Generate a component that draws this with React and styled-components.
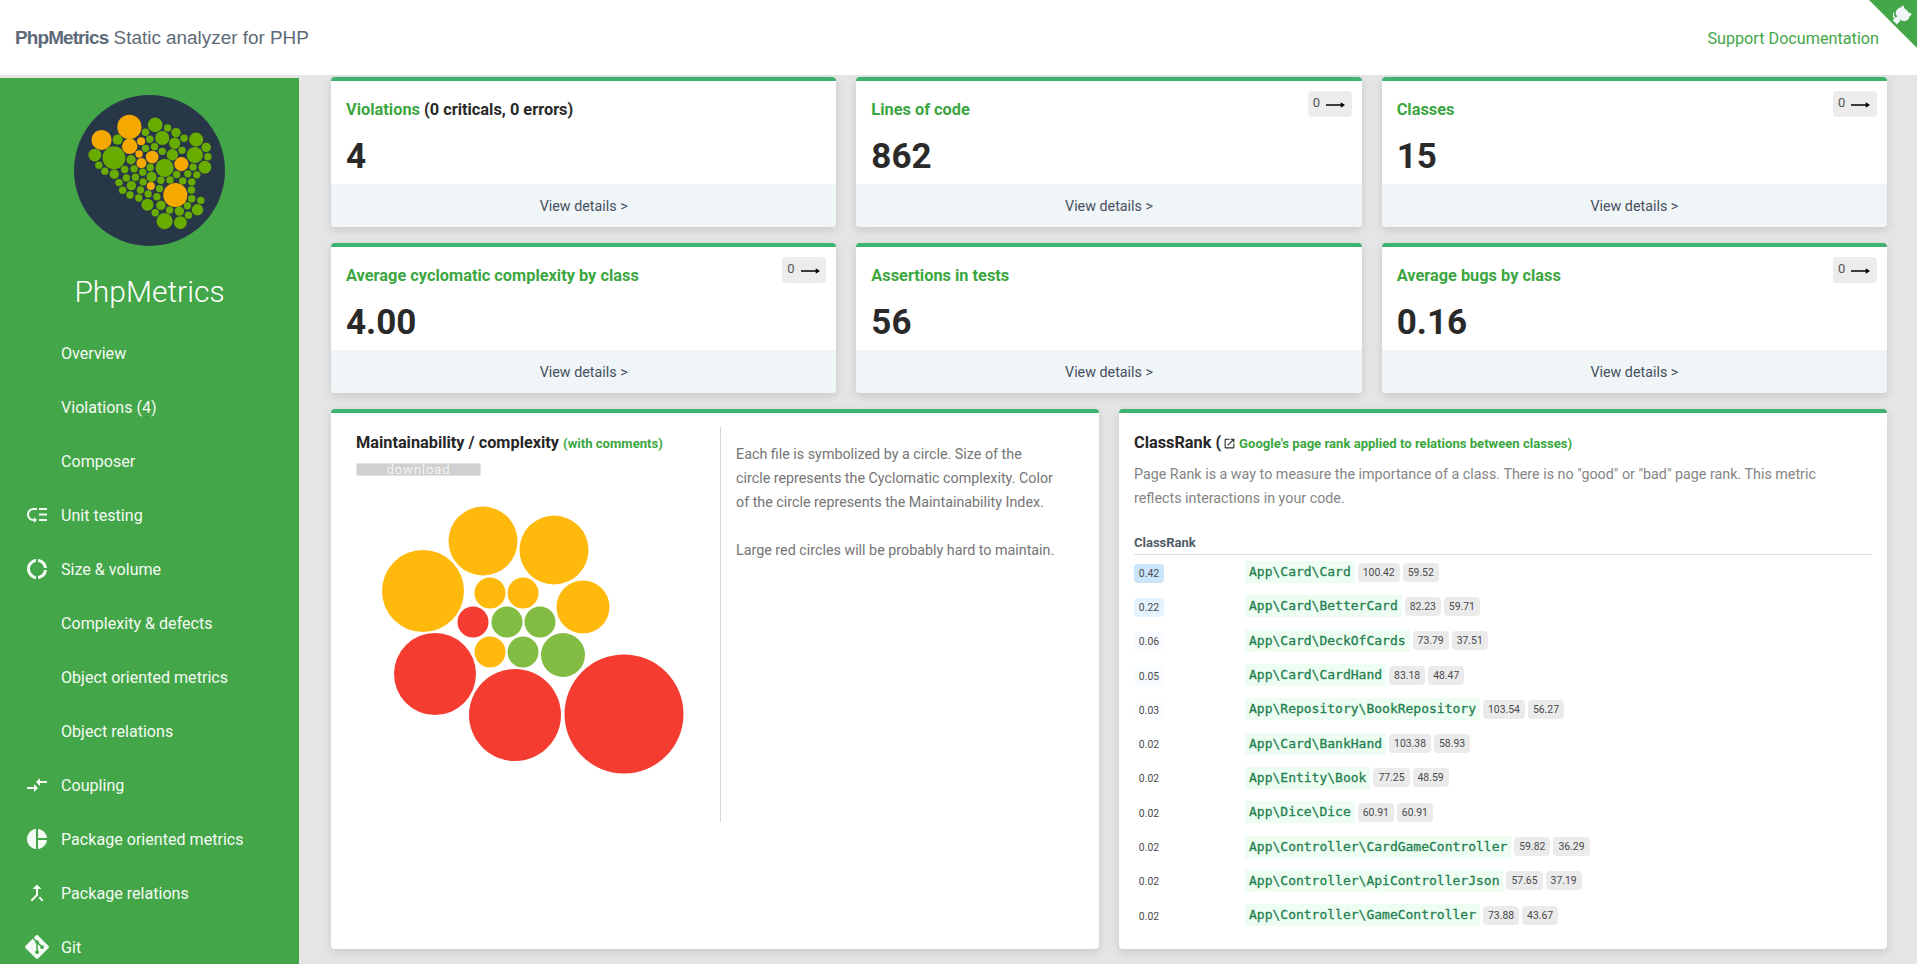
import React from "react";
import styled, { createGlobalStyle } from "styled-components";
import { MdLowPriority, MdDonutLarge, MdCompareArrows, MdPieChart, MdCallMerge, MdOpenInNew } from "react-icons/md";
import { SiGit } from "react-icons/si";

const GlobalStyle = createGlobalStyle`
  html, body {
    margin: 0;
    height: 100%;
    overflow: hidden;
    background: #e5e5e5;
    font-family: Roboto, "Liberation Sans", sans-serif;
  }
  * { box-sizing: border-box; }
`;

const navItems = [
  { label: "Overview" },
  { label: "Violations (4)" },
  { label: "Composer" },
  { label: "Unit testing", icon: <MdLowPriority /> },
  { label: "Size & volume", icon: <MdDonutLarge /> },
  { label: "Complexity & defects" },
  { label: "Object oriented metrics" },
  { label: "Object relations" },
  { label: "Coupling", icon: <MdCompareArrows /> },
  { label: "Package oriented metrics", icon: <MdPieChart /> },
  { label: "Package relations", icon: <MdCallMerge /> },
  { label: "Git", icon: <SiGit /> },
];

const statCards = [
  { title: "Violations", extra: "(0 criticals, 0 errors)", value: "4" },
  { title: "Lines of code", value: "862", trend: true },
  { title: "Classes", value: "15", trend: true },
  { title: "Average cyclomatic complexity by class", value: "4.00", trend: true },
  { title: "Assertions in tests", value: "56" },
  { title: "Average bugs by class", value: "0.16", trend: true },
];

const ranks = [
  { rank: "0.42", tint: "#cbe6fc", name: "App\\Card\\Card", a: "100.42", b: "59.52" },
  { rank: "0.22", tint: "#e5f3fe", name: "App\\Card\\BetterCard", a: "82.23", b: "59.71" },
  { rank: "0.06", tint: "#f8fbff", name: "App\\Card\\DeckOfCards", a: "73.79", b: "37.51" },
  { rank: "0.05", tint: "#f8fbff", name: "App\\Card\\CardHand", a: "83.18", b: "48.47" },
  { rank: "0.03", tint: "#fbfdff", name: "App\\Repository\\BookRepository", a: "103.54", b: "56.27" },
  { rank: "0.02", name: "App\\Card\\BankHand", a: "103.38", b: "58.93" },
  { rank: "0.02", name: "App\\Entity\\Book", a: "77.25", b: "48.59" },
  { rank: "0.02", name: "App\\Dice\\Dice", a: "60.91", b: "60.91" },
  { rank: "0.02", name: "App\\Controller\\CardGameController", a: "59.82", b: "36.29" },
  { rank: "0.02", name: "App\\Controller\\ApiControllerJson", a: "57.65", b: "37.19" },
  { rank: "0.02", name: "App\\Controller\\GameController", a: "73.88", b: "43.67" },
];

const YELLOW = "#ffb90c";
const RED = "#f43c30";
const GREEN = "#82bc42";

// x, y, r read off the reference, in px inside the panel
const bubbles = [
  [153, 131, 34.5, YELLOW], [224, 140, 34.5, YELLOW], [93, 181, 41, YELLOW],
  [160, 183, 15.5, YELLOW], [193, 183, 15.5, YELLOW], [253, 197, 26.5, YELLOW],
  [143, 212, 15.5, RED], [177, 212, 15.5, GREEN], [210, 212, 15.5, GREEN],
  [160, 242, 15.5, YELLOW], [193, 242, 15.5, GREEN], [233, 245, 22, GREEN],
  [105, 264, 41, RED], [185, 305, 46, RED], [294, 304, 59.5, RED],
];

const logoOrange = [
  [207, 123, 36], [124, 162, 30], [208, 181, 23], [242, 166, 12], [236, 204, 11],
  [275, 213, 19], [243, 231, 15], [362, 234, 21], [271, 299, 12], [344, 326, 36],
];

const logoGreen = [
  [284, 117, 22], [321, 126, 11], [255, 139, 11], [346, 140, 14], [172, 161, 15], [268, 160, 11],
  [305, 156, 21], [370, 157, 11], [406, 161, 21], [342, 172, 17], [436, 184, 14], [282, 182, 11],
  [255, 187, 11], [364, 193, 11], [305, 196, 11], [104, 207, 19], [161, 215, 34], [212, 221, 14],
  [335, 206, 17], [402, 207, 24], [441, 212, 11], [116, 237, 11], [269, 244, 11], [312, 245, 27],
  [397, 243, 11], [432, 243, 19], [134, 255, 11], [193, 250, 11], [221, 248, 11], [247, 258, 11],
  [162, 264, 14], [348, 265, 11], [381, 263, 11], [408, 266, 11], [198, 275, 11], [225, 273, 11],
  [273, 272, 15], [301, 282, 11], [328, 281, 11], [366, 284, 11], [393, 287, 11], [176, 289, 11],
  [248, 287, 11], [213, 298, 14], [297, 307, 11], [392, 311, 11], [187, 312, 11], [240, 311, 11],
  [209, 326, 11], [263, 323, 11], [289, 331, 11], [235, 335, 11], [393, 337, 11], [420, 342, 11],
  [261, 355, 18], [301, 357, 14], [380, 358, 11], [327, 371, 11], [356, 374, 14], [410, 370, 17],
  [284, 379, 11], [383, 386, 11], [312, 404, 24], [359, 408, 19],
];

const Logo = () => (
  <LogoSvg viewBox="42 28 450 450">
    <circle cx="267" cy="253" r="225" fill="#283748" />
    {logoGreen.map(([x, y, r]) => (
      <circle key={`${x}-${y}`} cx={x} cy={y} r={r} fill="#69ac00" />
    ))}
    {logoOrange.map(([x, y, r]) => (
      <circle key={`${x}-${y}`} cx={x} cy={y} r={r} fill="#f5a800" />
    ))}
  </LogoSvg>
);

const Corner = () => (
  <CornerSvg viewBox="0 0 250 250">
    <path d="M0,0 L250,250 L250,0 Z" fill="#43a648" />
    <g transform="translate(6 -12)" fill="#f1f5f8">
      <path d="M128.3,109.0 C113.8,99.7 119.0,89.6 119.0,89.6 C122.0,82.7 120.5,78.6 120.5,78.6 C119.2,72.0 123.4,76.3 123.4,76.3 C127.3,80.9 125.5,87.3 125.5,87.3 C122.9,97.6 130.6,101.9 134.4,103.2" />
      <path d="M115.0,115.0 C114.9,115.1 118.7,116.5 119.8,115.4 L133.7,101.6 C136.9,99.2 139.9,98.4 142.2,98.6 C133.8,88.0 127.5,74.4 143.8,58.0 C148.5,53.4 154.0,51.2 159.7,51.0 C160.3,49.4 163.2,43.6 171.4,40.1 C171.4,40.1 176.1,42.5 178.8,56.2 C183.1,58.6 187.2,61.8 190.9,65.4 C194.5,69.0 197.7,73.2 200.1,77.6 C213.8,80.2 216.3,84.9 216.3,84.9 C212.7,93.1 206.9,96.0 205.4,96.6 C205.1,102.4 203.0,107.8 198.3,112.5 C181.9,128.9 168.3,122.5 157.7,114.1 C157.9,116.9 156.7,120.9 152.7,124.9 L141.0,136.5 C139.8,137.7 141.6,141.9 141.8,141.8 Z" />
    </g>
  </CornerSvg>
);

const TrendBadge = () => (
  <Trend>
    0
    <svg width="19" height="8" viewBox="0 0 20 8">
      <path d="M0 4h17" stroke="#000" strokeWidth="1.6" />
      <path d="M15.5 1.2 20 4l-4.5 2.8z" fill="#000" />
    </svg>
  </Trend>
);

const App = () => {
  return (
    <Page>
      <GlobalStyle />
      <Header>
        <Brand>
          <strong>PhpMetrics</strong> Static analyzer for PHP
        </Brand>
        <SupportLink>Support Documentation</SupportLink>
        <Corner />
      </Header>
      <Body>
        <Sidebar>
          <Logo />
          <SideTitle>PhpMetrics</SideTitle>
          <NavList>
            {navItems.map((item) => (
              <NavItem key={item.label}>
                <NavIcon>{item.icon}</NavIcon>
                {item.label}
              </NavItem>
            ))}
          </NavList>
        </Sidebar>
        <Main>
          <CardGrid>
            {statCards.map((card) => (
              <StatCard key={card.title}>
                <StatBody>
                  {card.trend && <TrendBadge />}
                  <StatTitle>
                    <em>{card.title}</em>
                    {card.extra && ` ${card.extra}`}
                  </StatTitle>
                  <StatValue>{card.value}</StatValue>
                </StatBody>
                <StatFooter>View details &gt;</StatFooter>
              </StatCard>
            ))}
          </CardGrid>
          <PanelGrid>
            <Panel>
              <ChartColumn>
                <PanelTitle>
                  Maintainability / complexity <small>(with comments)</small>
                </PanelTitle>
                <DownloadButton>download</DownloadButton>
                <Chart viewBox="1 66 380 320">
                  {bubbles.map(([x, y, r, color]) => (
                    <circle key={`${x}-${y}`} cx={x} cy={y} r={r} fill={color} />
                  ))}
                </Chart>
              </ChartColumn>
              <ChartNote>
                <p>
                  Each file is symbolized by a circle. Size of the
                  <br />
                  circle represents the Cyclomatic complexity. Color
                  <br />
                  of the circle represents the Maintainability Index.
                </p>
                <p>Large red circles will be probably hard to maintain.</p>
              </ChartNote>
            </Panel>
            <RankPanel>
              <PanelTitle>
                ClassRank (<MdOpenInNew /><small>Google's page rank applied to relations between classes)</small>
              </PanelTitle>
              <RankIntro>
                Page Rank is a way to measure the importance of a class. There is no "good" or "bad" page
                rank. This metric reflects interactions in your code.
              </RankIntro>
              <RankHead>ClassRank</RankHead>
              {ranks.map((row) => (
                <RankRow key={row.name}>
                  <RankCell>
                    <RankPill $tint={row.tint}>{row.rank}</RankPill>
                  </RankCell>
                  <ClassName>{row.name}</ClassName>
                  <Metric>{row.a}</Metric>
                  <Metric>{row.b}</Metric>
                </RankRow>
              ))}
            </RankPanel>
          </PanelGrid>
        </Main>
      </Body>
    </Page>
  );
};

const Page = styled.div`
  height: 964px;
  display: flex;
  flex-direction: column;
  overflow: hidden;
`;

const Header = styled.header`
  position: relative;
  z-index: 2;
  flex: none;
  height: 75px;
  display: flex;
  align-items: center;
  justify-content: space-between;
  padding: 1px 38px 0 15px;
  background: #fff;
`;

const Brand = styled.div`
  font-family: "Liberation Sans", Arial, sans-serif;
  font-size: 18.9px;
  color: #5d6a78;
  strong {
    letter-spacing: -0.85px;
  }
`;

const SupportLink = styled.a`
  font-size: 16.2px;
  color: #43a648;
`;

const CornerSvg = styled.svg`
  position: absolute;
  top: 0;
  right: 0;
  width: 48px;
  height: 48px;
`;

const Body = styled.div`
  flex: 1;
  min-height: 0;
  display: flex;
  padding-top: 3px;
`;

const Sidebar = styled.aside`
  flex: none;
  width: 299px;
  background: #43a648;
  color: #fff;
  display: flex;
  flex-direction: column;
  align-items: center;
  padding-top: 17px;
  overflow: hidden;
`;

const LogoSvg = styled.svg`
  flex: none;
  width: 151px;
  height: 151px;
`;

const SideTitle = styled.div`
  margin-top: 26px;
  font-size: 30px;
  font-weight: 300;
  line-height: 40px;
`;

const NavList = styled.nav`
  align-self: stretch;
  margin-top: 14.4px;
`;

const NavItem = styled.div`
  height: 54px;
  display: flex;
  align-items: center;
  padding-left: 27px;
  font-size: 16.1px;
  color: #f4faf4;
`;

const NavIcon = styled.span`
  flex: none;
  width: 34px;
  display: flex;
  svg {
    width: 24px;
    height: 24px;
    margin-left: -2px;
  }
`;

const Main = styled.main`
  flex: 1;
  min-width: 0;
  margin-top: -1px;
  padding: 0 30px 0 32px;
`;

const CardGrid = styled.div`
  display: grid;
  grid-template-columns: repeat(3, 1fr);
  gap: 16px 20px;
`;

const Sheet = styled.section`
  background: #fff;
  border-top: 4px solid #3eb370;
  border-radius: 4px;
  box-shadow: 0 3px 10px rgba(0, 0, 0, 0.13);
`;

const StatCard = styled(Sheet)`
  height: 150px;
  display: flex;
  flex-direction: column;
  overflow: hidden;
`;

const StatBody = styled.div`
  position: relative;
  flex: 1;
  padding: 16.5px 15px 0;
`;

const Trend = styled.div`
  position: absolute;
  top: 10px;
  right: 10px;
  width: 44px;
  height: 26px;
  display: flex;
  align-items: center;
  gap: 6px;
  padding: 0 0 3px 5px;
  border-radius: 4px;
  background: #ececec;
  font-size: 13px;
  color: #555;
  svg {
    margin-top: 4px;
  }
`;

const StatTitle = styled.div`
  font-size: 16.35px;
  font-weight: 700;
  line-height: 24px;
  color: #282828;
  em {
    font-style: normal;
    color: #3ba640;
  }
`;

const StatValue = styled.div`
  margin-top: 13px;
  font-size: 35px;
  font-weight: 700;
  line-height: 44px;
  color: #2a2a2a;
`;

const StatFooter = styled.div`
  flex: none;
  height: 43px;
  display: flex;
  align-items: center;
  justify-content: center;
  background: #f0f5f8;
  font-size: 14.3px;
  color: #46505f;
`;

const PanelGrid = styled.div`
  display: grid;
  grid-template-columns: 1fr 1fr;
  gap: 20px;
  margin-top: 16px;
`;

const Panel = styled(Sheet)`
  height: 540px;
  display: flex;
  padding: 18px 0 0 0;
`;

const ChartColumn = styled.div`
  flex: none;
  width: 390px;
  height: 395px;
  margin-top: -4px;
  padding: 4px 0 0 25px;
  border-right: 1px solid #d6d6d6;
`;

const PanelTitle = styled.div`
  font-size: 16.3px;
  font-weight: 700;
  line-height: 24px;
  color: #262626;
  small {
    font-size: 13.1px;
    color: #3ba640;
  }
  svg {
    width: 13px;
    height: 13px;
    margin: 0 3px 0 2px;
    vertical-align: -2px;
  }
`;

const DownloadButton = styled.div`
  width: 125px;
  height: 13px;
  margin-top: 7px;
  border: 1px solid #e6dfee;
  border-radius: 2px;
  background: #d0d0d0;
  color: #fff;
  font-size: 13px;
  font-weight: 300;
  line-height: 11px;
  letter-spacing: 1px;
  text-align: center;
`;

const Chart = styled.svg`
  display: block;
  width: 380px;
  height: 320px;
  margin-left: -25px;
`;

const ChartNote = styled.div`
  flex: none;
  width: 345px;
  padding-left: 15px;
  margin-top: 11px;
  font-size: 14.3px;
  line-height: 24px;
  color: #757575;
  p {
    margin: 0 0 24px;
  }
`;

const RankPanel = styled(Panel)`
  display: block;
  padding: 18px 15px 0;
`;

const RankIntro = styled.p`
  max-width: 700px;
  margin: 7px 0 0;
  font-size: 14.3px;
  line-height: 23.5px;
  color: #858585;
`;

const RankHead = styled.div`
  height: 22px;
  margin-top: 23px;
  border-bottom: 1px solid #dcdcdc;
  font-size: 13px;
  font-weight: 700;
  line-height: 20px;
  color: #515b66;
`;

const RankRow = styled.div`
  height: 34.3px;
  display: flex;
  align-items: center;
`;

const RankCell = styled.div`
  flex: none;
  width: 111px;
`;

const RankPill = styled.span`
  display: inline-block;
  width: 30px;
  height: 19px;
  border-radius: 4px;
  background: ${(p) => p.$tint || "transparent"};
  font-size: 10.4px;
  line-height: 19px;
  text-align: center;
  color: #4a4a4a;
`;

const ClassName = styled.code`
  height: 22px;
  padding: 0 4px;
  margin-right: 3px;
  background: #edfdf1;
  font-family: "DejaVu Sans Mono", "Liberation Mono", monospace;
  font-size: 13px;
  line-height: 21px;
  color: #1f7f50;
  -webkit-text-stroke: 0.3px #1f7f50;
`;

const Metric = styled.span`
  height: 19px;
  padding: 0 5px;
  margin-right: 3px;
  border-radius: 4px;
  background: #ebebeb;
  font-size: 10.4px;
  line-height: 19px;
  color: #4a4a4a;
`;

export default App;
